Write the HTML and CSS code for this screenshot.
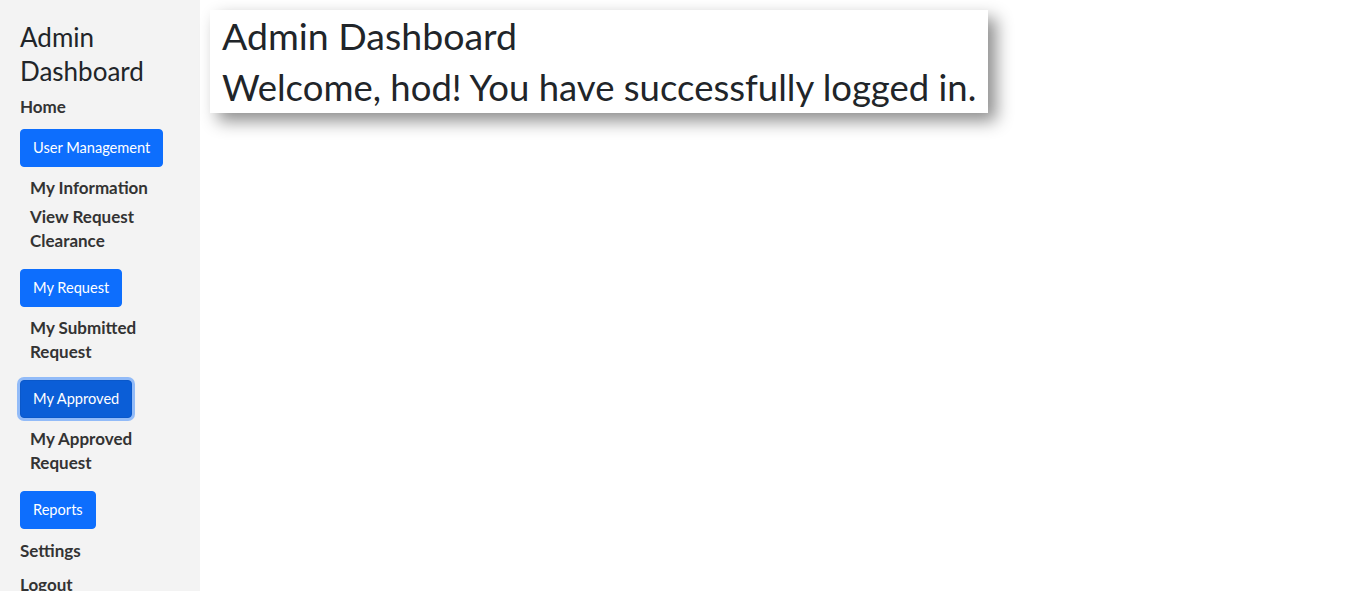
FILE: index.html
```html
<!DOCTYPE html>
<html lang="en">
<head>
<meta charset="utf-8">
<title>Admin Dashboard</title>
<link rel="stylesheet" href="styles.css">
</head>
<body>
<div class="layout">
  <aside class="sidebar">
    <h2 class="side-title">Admin Dashboard</h2>
    <ul class="nav">
      <li class="nav-item"><a class="nav-link" href="#">Home</a></li>
      <li class="nav-item">
        <button class="btn">User Management</button>
        <ul class="sub">
          <li><a class="sub-link" href="#">My Information</a></li>
          <li><a class="sub-link" href="#">View Request Clearance</a></li>
        </ul>
      </li>
      <li class="nav-item">
        <button class="btn">My Request</button>
        <ul class="sub">
          <li><a class="sub-link" href="#">My Submitted Request</a></li>
        </ul>
      </li>
      <li class="nav-item">
        <button class="btn btn-focus">My Approved</button>
        <ul class="sub">
          <li><a class="sub-link" href="#">My Approved Request</a></li>
        </ul>
      </li>
      <li class="nav-item"><button class="btn">Reports</button></li>
      <li class="nav-item"><a class="nav-link" href="#">Settings</a></li>
      <li class="nav-item"><a class="nav-link" href="#">Logout</a></li>
    </ul>
  </aside>
  <main class="main">
    <div class="card">
      <h1 class="card-title">Admin Dashboard</h1>
      <p class="card-text">Welcome, hod! You have successfully logged in.</p>
    </div>
  </main>
</div>
</body>
</html>
```

FILE: styles.css
```css
html, body {
  margin: 0;
  padding: 0;
  height: 100%;
  overflow: hidden;
}
body {
  font-family: "Lato", "Noto Sans", sans-serif;
  color: #212529;
  background: #fff;
}
.layout {
  display: flex;
  min-height: 100%;
}
.sidebar {
  width: 200px;
  flex: 0 0 200px;
  background: #f3f3f3;
  padding: 20px 20px 0 20px;
  box-sizing: border-box;
}
.side-title {
  margin: 0 0 7px 0;
  font-family: "Lato", sans-serif;
  font-weight: 400;
  font-size: 26px;
  line-height: 34px;
  color: #212529;
}
.nav {
  list-style: none;
  margin: 0;
  padding: 0;
  display: flex;
  flex-direction: column;
  gap: 10px;
}
.nav-link, .sub-link {
  font-weight: 700;
  font-size: 17px;
  line-height: 24px;
  color: #333;
  text-decoration: none;
  display: block;
}
.btn {
  font-family: "Lato", sans-serif;
  font-size: 14.6px;
  line-height: 22px;
  color: #fff;
  background: #0d6efd;
  border: 1px solid #0d6efd;
  border-radius: 4px;
  padding: 7px 12px;
  display: inline-block;
  cursor: pointer;
}
.btn-focus {
  background: #0b5ed7;
  border-color: #0a58ca;
  box-shadow: 0 0 0 3px rgba(49, 132, 253, 0.5);
}
.sub {
  list-style: none;
  margin: 9px 0 6px 0;
  padding: 0 0 0 10px;
  display: flex;
  flex-direction: column;
  gap: 5px;
}
.main {
  flex: 1;
  padding: 10px;
}
.card {
  display: inline-block;
  background: #fff;
  padding: 0 12px 0 12px;
  box-shadow: 8px 8px 16px rgba(0, 0, 0, 0.45);
}
.card-title {
  margin: 0;
  font-weight: 400;
  font-size: 37.5px;
  line-height: 52px;
}
.card-text {
  margin: 0;
  font-size: 36.5px;
  line-height: 51px;
}
```
